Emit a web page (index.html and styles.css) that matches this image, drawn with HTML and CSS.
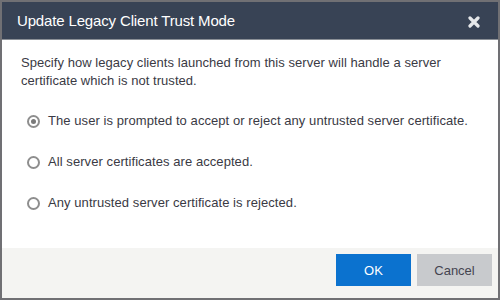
FILE: index.html
```html
<!DOCTYPE html>
<html>
<head>
<meta charset="utf-8">
<link rel="stylesheet" href="styles.css">
</head>
<body>
<div class="dialog">
  <div class="header">
    <span class="title">Update Legacy Client Trust Mode</span>
    <svg class="close" width="12" height="12" viewBox="0 0 12 12"><path d="M2 2 L10 10 M10 2 L2 10" stroke="#e6e8ea" stroke-width="3.2" stroke-linecap="round"/></svg>
  </div>
  <div class="body">
    <p class="desc">Specify how legacy clients launched from this server will handle a server certificate which is not trusted.</p>
    <div class="options">
      <label class="option"><span class="radio checked"></span>The user is prompted to accept or reject any untrusted server certificate.</label>
      <label class="option"><span class="radio"></span>All server certificates are accepted.</label>
      <label class="option"><span class="radio"></span>Any untrusted server certificate is rejected.</label>
    </div>
  </div>
  <div class="footer">
    <button class="btn ok">OK</button>
    <button class="btn cancel">Cancel</button>
  </div>
</div>
</body>
</html>
```

FILE: styles.css
```css
html, body {
  margin: 0;
  padding: 0;
  background: #fff;
}
.dialog {
  width: 500px;
  height: 300px;
  box-sizing: border-box;
  border: 2px solid #707074;
  display: flex;
  flex-direction: column;
  font-family: "Liberation Sans", Arial, sans-serif;
  background: #fff;
}
.header {
  height: 37px;
  background: #384355;
  border-bottom: 1px solid #8a8f96;
  display: flex;
  align-items: center;
  justify-content: space-between;
  padding: 0 18px 0 15px;
  flex-shrink: 0;
}
.title {
  color: #ffffff;
  font-size: 15px;
  letter-spacing: -0.15px;
}
.close {
  display: block;
  margin-top: 3px;
}
.body {
  flex: 1;
  padding: 14px 19px 0 19px;
}
.desc {
  margin: 0;
  font-size: 13px;
  line-height: 18px;
  color: #3a3a44;
  letter-spacing: 0.05px;
}
.options {
  display: flex;
  flex-direction: column;
  gap: 23px;
  margin-top: 22px;
  padding-left: 6px;
}
.option {
  display: flex;
  align-items: center;
  font-size: 13px;
  line-height: 18px;
  color: #3a3a44;
  letter-spacing: 0.07px;
}
.radio {
  width: 13px;
  height: 13px;
  box-sizing: border-box;
  border: 2px solid #8e8e8e;
  border-radius: 50%;
  margin-right: 8px;
  display: flex;
  align-items: center;
  justify-content: center;
  flex-shrink: 0;
}
.radio.checked::after {
  content: "";
  width: 5px;
  height: 5px;
  border-radius: 50%;
  background: #7a7a7a;
}
.footer {
  height: 44px;
  background: #f4f4f2;
  display: flex;
  justify-content: flex-end;
  align-items: flex-start;
  gap: 6px;
  padding: 6px 6px 0 0;
  flex-shrink: 0;
}
.btn {
  width: 75px;
  height: 32px;
  border: none;
  font-family: "Liberation Sans", Arial, sans-serif;
  font-size: 13px;
  padding: 0;
}
.ok {
  background: #0b72cf;
  color: #fff;
}
.cancel {
  background: #c8cacd;
  color: #444450;
}
```
